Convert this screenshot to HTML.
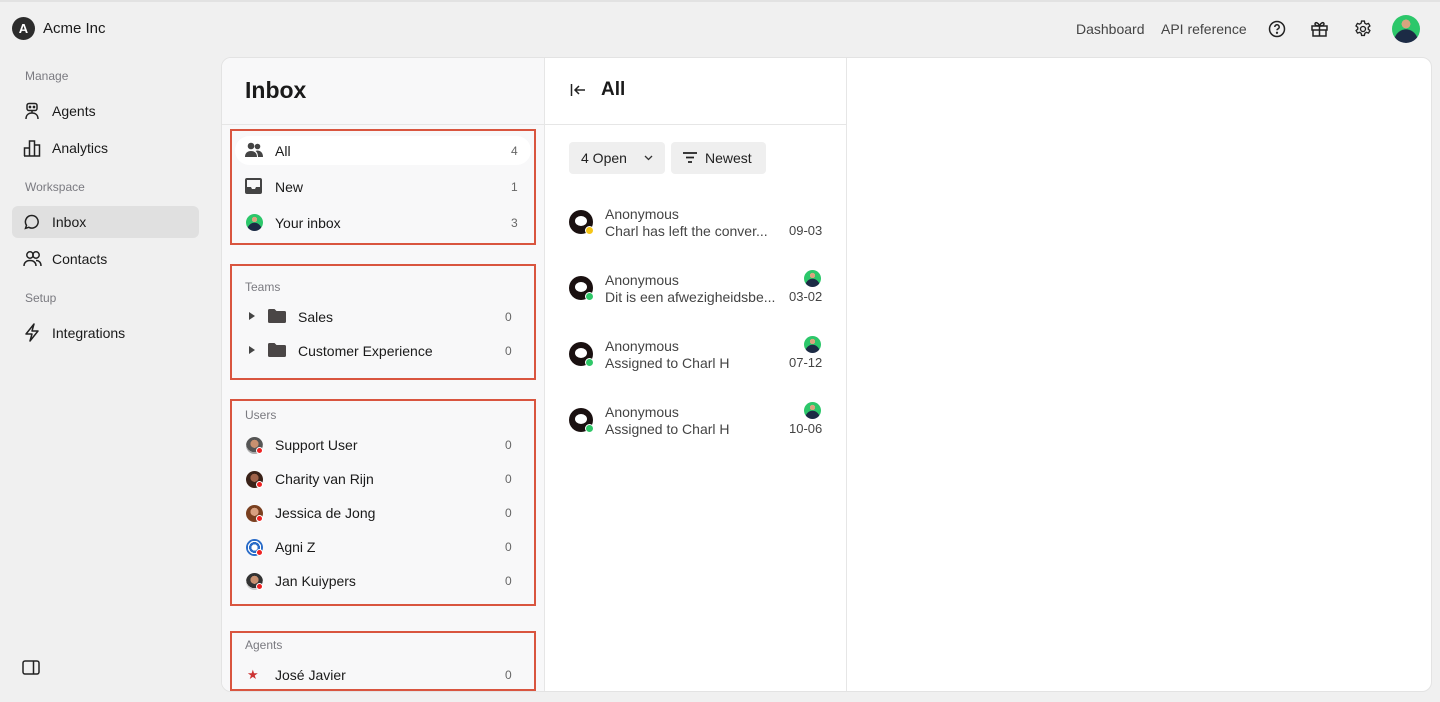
<!DOCTYPE html>
<html><head><meta charset="utf-8"><style>
*{box-sizing:border-box;margin:0;padding:0}
body{width:1440px;height:702px;background:#f0f0f0;font-family:"Liberation Sans",sans-serif;color:#1a1a1a;position:relative;overflow:hidden}
.a{position:absolute}
.t{font-size:14px;white-space:nowrap}
.lbl{font-size:12px;color:#7a7a80}
.cnt{font-size:12px;color:#666}
.box{position:absolute;border:2px solid #d9553f}
.av{position:absolute;width:17px;height:17px;border-radius:50%;background:radial-gradient(circle at 50% 32%,#d9a47f 0 18%,transparent 19%),radial-gradient(ellipse 45% 50% at 50% 100%,#1c2b45 0 95%,transparent 100%),#2cc76a}
.dot{position:absolute;width:7px;height:7px;border-radius:50%;border:1px solid #fff}
.bub{position:absolute;width:24px;height:24px;border-radius:50%;background:#1a1010}
.bub:after{content:"";position:absolute;left:6px;top:6px;width:12px;height:10px;border-radius:50%;background:#fff}
</style></head><body>
<div class="a" style="left:0;top:0;width:1440px;height:2px;background:#e2e2e2"></div>
<div class="a" style="left:12px;top:17px;width:23px;height:23px;border-radius:50%;background:#2c2c2c;color:#fff;font-weight:bold;font-size:13px;text-align:center;line-height:23px">A</div>
<div class="a t" style="left:43px;top:20px;font-size:15px">Acme Inc</div>
<div class="a t" style="left:1076px;top:21px;color:#444">Dashboard</div>
<div class="a t" style="left:1161px;top:21px;color:#444">API reference</div>
<svg class="a" style="left:1268px;top:20px" width="18" height="18" viewBox="0 0 18 18" fill="none" stroke="#222" stroke-width="1.5"><circle cx="9" cy="9" r="7.5"/><path d="M6.8 7a2.2 2.2 0 1 1 3 2c-.6.3-.8.7-.8 1.3"/><circle cx="9" cy="12.8" r=".4" fill="#222"/></svg>
<svg class="a" style="left:1310px;top:20px" width="19" height="18" viewBox="0 0 19 18" fill="none" stroke="#222" stroke-width="1.5"><rect x="2" y="6" width="15" height="4"/><path d="M3 10v6h13v-6M9.5 6v10M9.5 6C8 2 5 2 5 4s4 2 4.5 2M9.5 6C11 2 14 2 14 4s-4 2-4.5 2"/></svg>
<svg class="a" style="left:1353px;top:19px" width="20" height="20" viewBox="0 0 24 24" fill="none" stroke="#222" stroke-width="1.6"><circle cx="12" cy="12" r="3"/><path d="M10.3 2.5h3.4l.5 2.6 1.9 1.1 2.5-.9 1.7 3-2 1.7v2.2l2 1.7-1.7 3-2.5-.9-1.9 1.1-.5 2.6h-3.4l-.5-2.6-1.9-1.1-2.5.9-1.7-3 2-1.7V10L3.6 8.3l1.7-3 2.5.9 1.9-1.1z"/></svg>
<div class="av" style="left:1392px;top:15px;width:28px;height:28px"></div>
<div class="a lbl" style="left:25px;top:69px">Manage</div>
<svg class="a" style="left:23px;top:102px" width="18" height="18" viewBox="0 0 18 18" fill="none" stroke="#222" stroke-width="1.5"><rect x="4" y="1.5" width="10" height="7" rx="2"/><circle cx="7" cy="5" r=".6" fill="#222"/><circle cx="11" cy="5" r=".6" fill="#222"/><path d="M9 8.5v2M3 17c0-4 2.5-6 6-6s6 2 6 6"/></svg>
<div class="a t" style="left:52px;top:103px">Agents</div>
<svg class="a" style="left:23px;top:139px" width="18" height="18" viewBox="0 0 18 18" fill="none" stroke="#222" stroke-width="1.5"><path d="M1.5 17V9h5V2h5v15M6.5 17V9M11.5 6h5v11H1"/></svg>
<div class="a t" style="left:52px;top:140px">Analytics</div>
<div class="a lbl" style="left:25px;top:180px">Workspace</div>
<div class="a" style="left:12px;top:206px;width:187px;height:32px;border-radius:6px;background:#e0e0e0"></div>
<svg class="a" style="left:24px;top:214px" width="16" height="16" viewBox="0 0 16 16" fill="none" stroke="#222" stroke-width="1.5"><path d="M8 1.5a6.3 6.3 0 1 1-3.2 11.8L1.5 14.3l1-3A6.3 6.3 0 0 1 8 1.5z"/></svg>
<div class="a t" style="left:52px;top:214px">Inbox</div>
<svg class="a" style="left:23px;top:250px" width="19" height="17" viewBox="0 0 19 17" fill="none" stroke="#222" stroke-width="1.5"><circle cx="7" cy="5" r="3.2"/><circle cx="13" cy="5" r="3.2"/><path d="M1 16c0-3.5 2.5-5.5 6-5.5s6 2 6 5.5M13 10.5c3 0 5 2 5 5.5"/></svg>
<div class="a t" style="left:52px;top:251px">Contacts</div>
<div class="a lbl" style="left:25px;top:291px">Setup</div>
<svg class="a" style="left:24px;top:323px" width="16" height="19" viewBox="0 0 16 19" fill="none" stroke="#222" stroke-width="1.5" stroke-linejoin="round"><path d="M10 1L2 11h6l-2 7 8-10H8z"/></svg>
<div class="a t" style="left:52px;top:325px">Integrations</div>
<svg class="a" style="left:22px;top:660px" width="18" height="15" viewBox="0 0 18 15" fill="none" stroke="#222" stroke-width="1.5"><rect x="1" y="1" width="16" height="13" rx="2"/><path d="M11.5 1v13"/></svg>
<div class="a" style="left:221px;top:57px;width:1211px;height:635px;background:#fff;border-radius:10px;border:1px solid #e3e3e3;overflow:hidden">
  <div class="a" style="left:0;top:0;width:323px;height:635px;background:#f8f8f9;border-right:1px solid #e6e6e6"></div>
  <div class="a" style="left:0;top:66px;width:624px;height:1px;background:#e6e6e6"></div>
  <div class="a" style="left:624px;top:0;width:1px;height:635px;background:#e6e6e6"></div>
</div>
<div class="a" style="left:245px;top:77px;font-size:23px;font-weight:bold">Inbox</div>
<div class="box" style="left:230px;top:129px;width:306px;height:116px"></div>
<div class="a" style="left:235px;top:136px;width:296px;height:29px;border-radius:15px;background:#fff"></div>
<svg class="a" style="left:245px;top:142px" width="18" height="16" viewBox="0 0 18 16" fill="#444"><circle cx="6" cy="4" r="3.3"/><circle cx="12.5" cy="4.5" r="2.8"/><path d="M0 15c0-4 2.5-6 6-6s6 2 6 6zM12 8.5c3.5 0 6 2 6 6.5h-5c0-3-1-5-2.5-6z"/></svg>
<div class="a t" style="left:275px;top:143px">All</div><div class="a cnt" style="left:511px;top:144px">4</div>
<svg class="a" style="left:245px;top:178px" width="17" height="16" viewBox="0 0 17 16" fill="#444"><path d="M2 0h13a2 2 0 0 1 2 2v12a2 2 0 0 1-2 2H2a2 2 0 0 1-2-2V2a2 2 0 0 1 2-2zm0 2v7h4l1 2h3l1-2h4V2z"/></svg>
<div class="a t" style="left:275px;top:179px">New</div><div class="a cnt" style="left:511px;top:180px">1</div>
<div class="av" style="left:246px;top:214px"></div>
<div class="a t" style="left:275px;top:215px">Your inbox</div><div class="a cnt" style="left:511px;top:216px">3</div>
<div class="box" style="left:230px;top:264px;width:306px;height:116px"></div>
<div class="a lbl" style="left:245px;top:280px">Teams</div>
<div class="a" style="left:249px;top:312px;border-left:6px solid #444;border-top:4.5px solid transparent;border-bottom:4.5px solid transparent"></div>
<svg class="a" style="left:268px;top:309px" width="18" height="14" viewBox="0 0 18 14" fill="#4a4646"><path d="M0 1.5A1.5 1.5 0 0 1 1.5 0h5l2 2h8A1.5 1.5 0 0 1 18 3.5v9a1.5 1.5 0 0 1-1.5 1.5h-15A1.5 1.5 0 0 1 0 12.5z"/></svg>
<div class="a t" style="left:298px;top:309px">Sales</div><div class="a cnt" style="left:505px;top:310px">0</div>
<div class="a" style="left:249px;top:346px;border-left:6px solid #444;border-top:4.5px solid transparent;border-bottom:4.5px solid transparent"></div>
<svg class="a" style="left:268px;top:343px" width="18" height="14" viewBox="0 0 18 14" fill="#4a4646"><path d="M0 1.5A1.5 1.5 0 0 1 1.5 0h5l2 2h8A1.5 1.5 0 0 1 18 3.5v9a1.5 1.5 0 0 1-1.5 1.5h-15A1.5 1.5 0 0 1 0 12.5z"/></svg>
<div class="a t" style="left:298px;top:343px">Customer Experience</div><div class="a cnt" style="left:505px;top:344px">0</div>
<div class="box" style="left:230px;top:399px;width:306px;height:207px"></div>
<div class="a lbl" style="left:245px;top:408px">Users</div>
<div class="av" style="left:246px;top:437px;background:radial-gradient(circle at 50% 40%,#c89070 0 30%,#555 31% 62%,#aaa 63%)"></div><div class="dot" style="left:256px;top:447px;background:#e22"></div>
<div class="a t" style="left:275px;top:437px">Support User</div><div class="a cnt" style="left:505px;top:438px">0</div>
<div class="av" style="left:246px;top:471px;background:radial-gradient(circle at 50% 40%,#a0634a 0 30%,#3a2218 31%)"></div><div class="dot" style="left:256px;top:481px;background:#e22"></div>
<div class="a t" style="left:275px;top:471px">Charity van Rijn</div><div class="a cnt" style="left:505px;top:472px">0</div>
<div class="av" style="left:246px;top:505px;background:radial-gradient(circle at 50% 40%,#d8a080 0 30%,#7a4020 31%)"></div><div class="dot" style="left:256px;top:515px;background:#e22"></div>
<div class="a t" style="left:275px;top:505px">Jessica de Jong</div><div class="a cnt" style="left:505px;top:506px">0</div>
<div class="av" style="left:246px;top:539px;background:radial-gradient(circle,#fff 0 25%,#2a6cc8 26% 45%,#fff 46% 55%,#2a6cc8 56%)"></div><div class="dot" style="left:256px;top:549px;background:#e22"></div>
<div class="a t" style="left:275px;top:539px">Agni Z</div><div class="a cnt" style="left:505px;top:540px">0</div>
<div class="av" style="left:246px;top:573px;background:radial-gradient(circle at 50% 40%,#c89070 0 30%,#333 31% 62%,#ccc 63%)"></div><div class="dot" style="left:256px;top:583px;background:#e22"></div>
<div class="a t" style="left:275px;top:573px">Jan Kuiypers</div><div class="a cnt" style="left:505px;top:574px">0</div>
<div class="box" style="left:230px;top:631px;width:306px;height:60px"></div>
<div class="a lbl" style="left:245px;top:638px">Agents</div>
<div class="a" style="left:247px;top:667px;font-size:13px;color:#c33">&#9733;</div>
<div class="a t" style="left:275px;top:667px">José Javier</div><div class="a cnt" style="left:505px;top:668px">0</div>
<svg class="a" style="left:570px;top:83px" width="16" height="14" viewBox="0 0 16 14" fill="none" stroke="#222" stroke-width="1.5"><path d="M1.5 1v12M15 7H5M9 3L5 7l4 4"/></svg>
<div class="a" style="left:601px;top:79px;font-size:19px;font-weight:bold">All</div>
<div class="a" style="left:569px;top:142px;width:96px;height:32px;border-radius:4px;background:#efefef"></div>
<div class="a t" style="left:581px;top:150px;color:#222">4 Open</div>
<svg class="a" style="left:644px;top:155px" width="9" height="6" viewBox="0 0 9 6" fill="none" stroke="#333" stroke-width="1.3"><path d="M1 1l3.5 3.5L8 1"/></svg>
<div class="a" style="left:671px;top:142px;width:95px;height:32px;border-radius:4px;background:#efefef"></div>
<svg class="a" style="left:683px;top:152px" width="14" height="11" viewBox="0 0 14 11" fill="none" stroke="#222" stroke-width="1.8"><path d="M0 1h14M3 5.5h8M5 10h4"/></svg>
<div class="a t" style="left:705px;top:150px;color:#222">Newest</div>
<div class="bub" style="left:569px;top:210px"></div><div class="dot" style="left:585px;top:226px;width:9px;height:9px;background:#f5c518"></div>
<div class="a t" style="left:605px;top:206px;color:#444">Anonymous</div>
<div class="a t" style="left:605px;top:223px;color:#444">Charl has left the conver...</div>
<div class="a t" style="left:789px;top:223px;font-size:13px;color:#444">09-03</div>
<div class="bub" style="left:569px;top:276px"></div><div class="dot" style="left:585px;top:292px;width:9px;height:9px;background:#2fc768"></div>
<div class="a t" style="left:605px;top:272px;color:#444">Anonymous</div>
<div class="a t" style="left:605px;top:289px;color:#444">Dit is een afwezigheidsbe...</div>
<div class="av" style="left:804px;top:270px"></div>
<div class="a t" style="left:789px;top:289px;font-size:13px;color:#444">03-02</div>
<div class="bub" style="left:569px;top:342px"></div><div class="dot" style="left:585px;top:358px;width:9px;height:9px;background:#2fc768"></div>
<div class="a t" style="left:605px;top:338px;color:#444">Anonymous</div>
<div class="a t" style="left:605px;top:355px;color:#444">Assigned to Charl H</div>
<div class="av" style="left:804px;top:336px"></div>
<div class="a t" style="left:789px;top:355px;font-size:13px;color:#444">07-12</div>
<div class="bub" style="left:569px;top:408px"></div><div class="dot" style="left:585px;top:424px;width:9px;height:9px;background:#2fc768"></div>
<div class="a t" style="left:605px;top:404px;color:#444">Anonymous</div>
<div class="a t" style="left:605px;top:421px;color:#444">Assigned to Charl H</div>
<div class="av" style="left:804px;top:402px"></div>
<div class="a t" style="left:789px;top:421px;font-size:13px;color:#444">10-06</div>
</body></html>
